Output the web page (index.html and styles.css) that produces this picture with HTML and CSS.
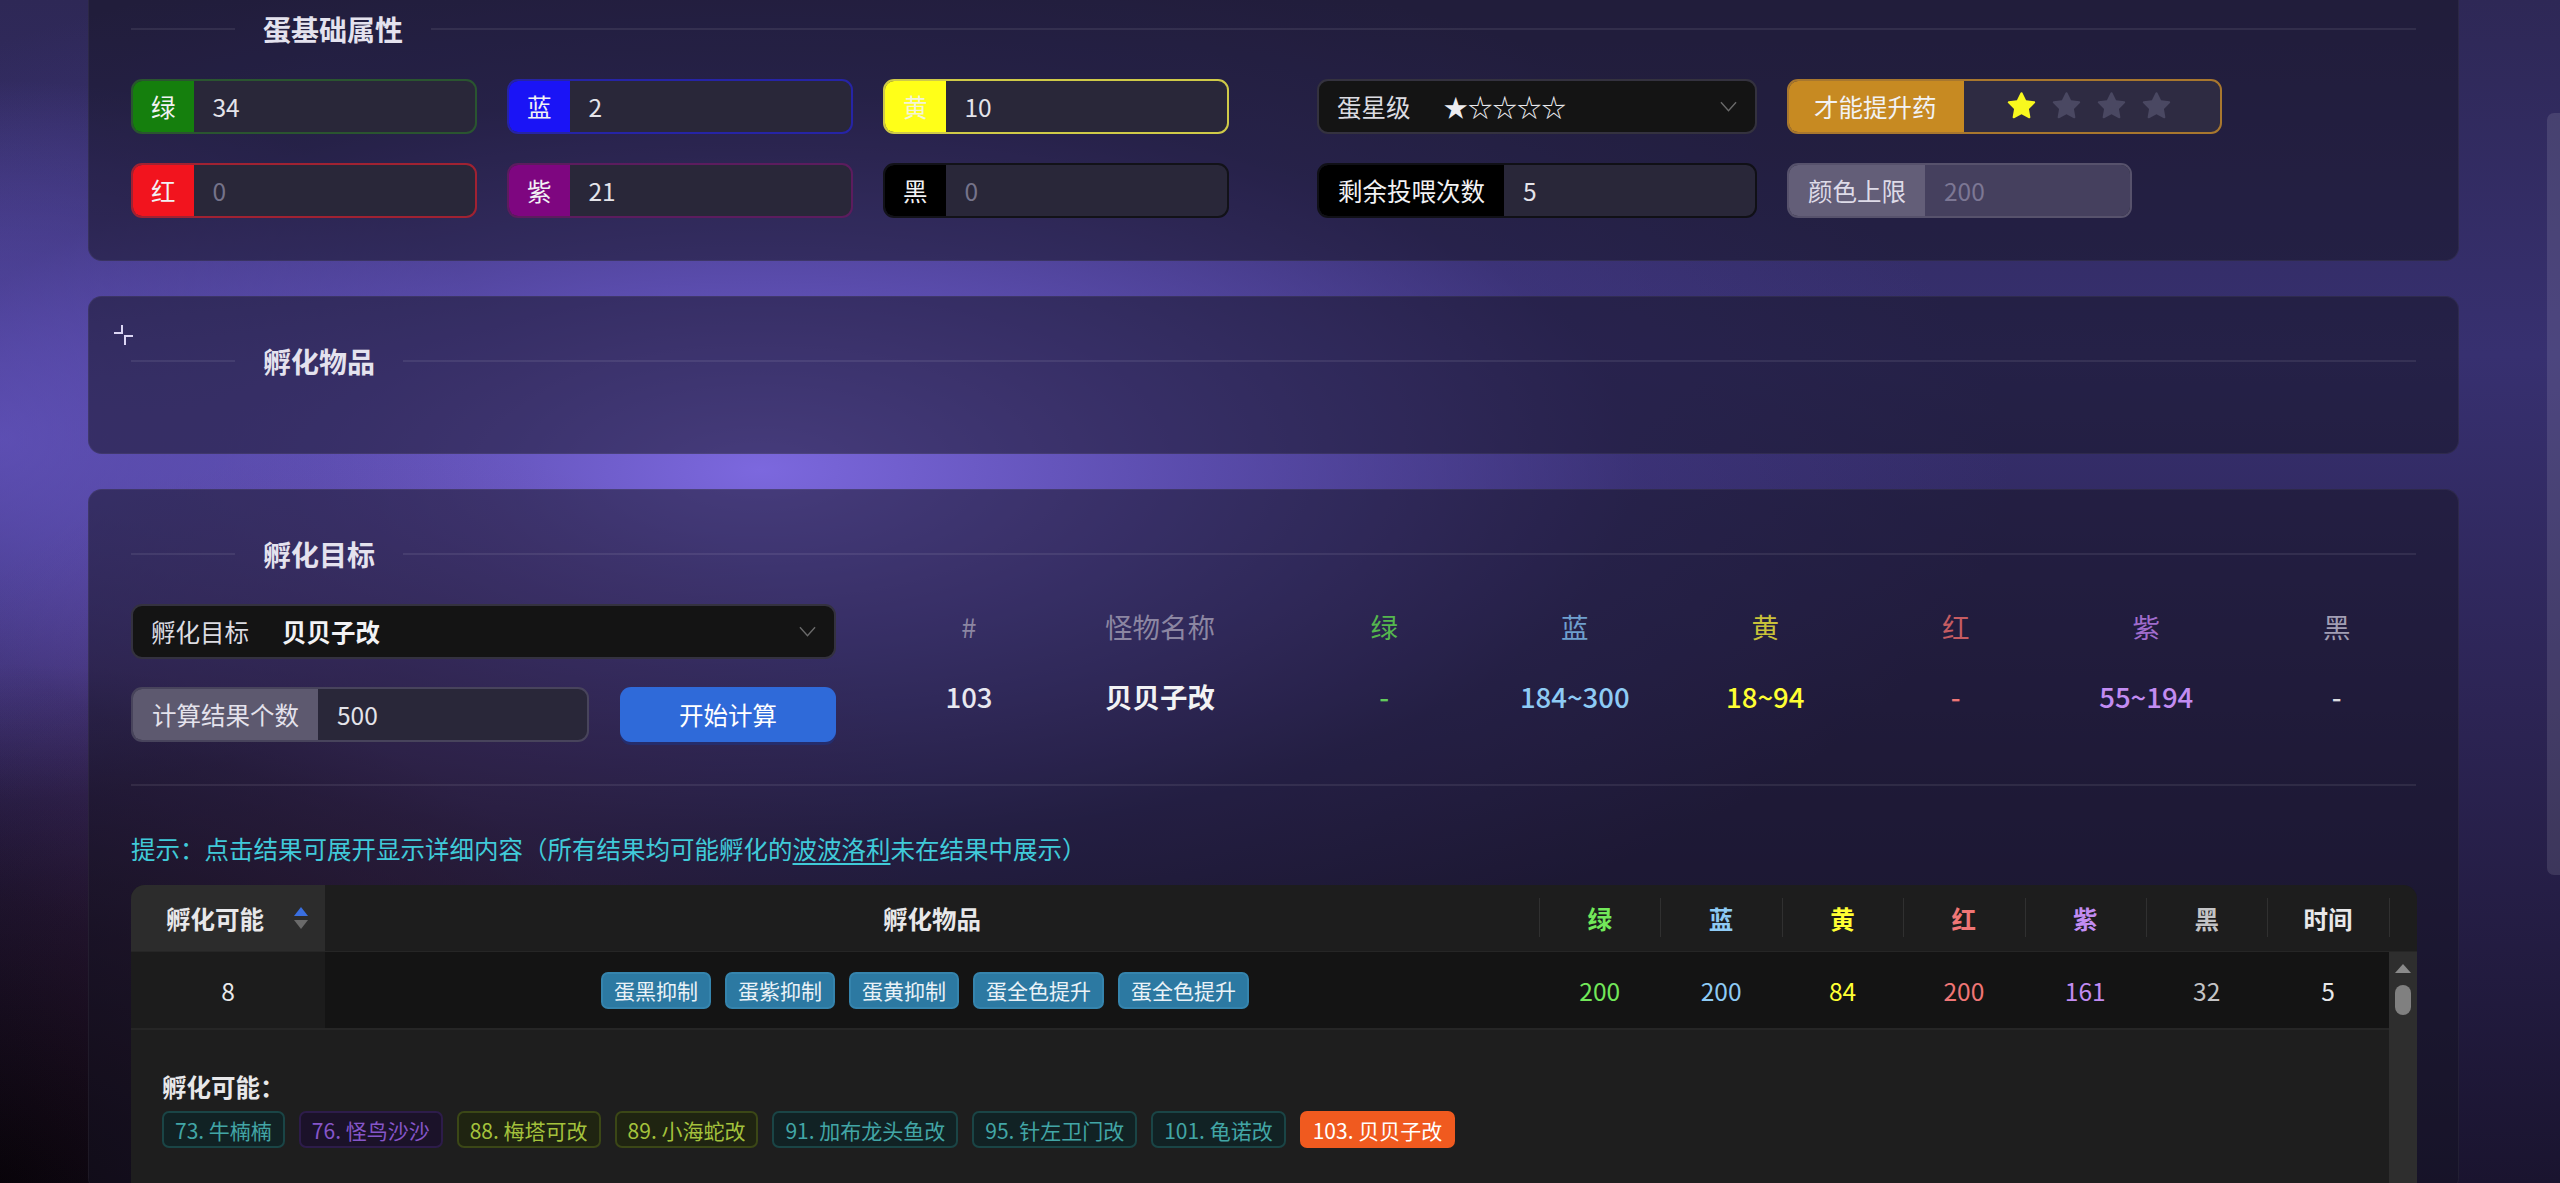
FILE: index.html
```html
<!DOCTYPE html>
<html lang="zh-CN">
<head>
<meta charset="utf-8">
<title>孵化计算器</title>
<link rel="stylesheet" href="styles.css">
</head>
<body>
<svg class="defs" width="0" height="0" aria-hidden="true">
  <symbol id="star" viewBox="64 64 896 896">
    <path d="M908.1 353.1l-253.9-36.9L540.7 86.1c-3.1-6.3-8.2-11.4-14.5-14.5-15.8-7.8-35-1.3-42.9 14.5L369.8 316.2l-253.9 36.9c-7 1-13.4 4.3-18.3 9.3a32.05 32.05 0 00.6 45.3l183.7 179.1-43.4 252.9a31.950 31.950 0 0046.4 33.7L512 754l227.1 119.4c6.2 3.3 13.4 4.4 20.3 3.2 17.4-3 29.1-19.5 26.1-36.9l-43.4-252.9 183.7-179.1c5-4.9 8.3-11.3 9.3-18.3 2.7-17.5-9.5-33.7-27-36.3z"/>
  </symbol>
  <symbol id="chev" viewBox="0 0 18 11">
    <polyline points="1,1 9,10 17,1" fill="none" stroke="currentColor" stroke-width="1.5"/>
  </symbol>
</svg>

<div class="page">
  <section class="card card-basic">
    <div class="divider"><span class="divider-text">蛋基础属性</span></div>
    <div class="attr-grid">
      <div class="ig c-green"><span class="ig-label">绿</span><span class="ig-input">34</span></div>
      <div class="ig c-blue"><span class="ig-label">蓝</span><span class="ig-input">2</span></div>
      <div class="ig c-yellow"><span class="ig-label">黄</span><span class="ig-input">10</span></div>
      <div class="select sel-star">
        <span class="sel-prefix">蛋星级</span><span class="sel-value">★☆☆☆☆</span>
        <svg class="chev"><use href="#chev"/></svg>
      </div>
      <div class="ig c-talent">
        <span class="ig-label">才能提升药</span>
        <span class="rate">
          <svg class="star on"><use href="#star"/></svg>
          <svg class="star"><use href="#star"/></svg>
          <svg class="star"><use href="#star"/></svg>
          <svg class="star"><use href="#star"/></svg>
        </span>
      </div>

      <div class="ig c-red"><span class="ig-label">红</span><span class="ig-input ph">0</span></div>
      <div class="ig c-purple"><span class="ig-label">紫</span><span class="ig-input">21</span></div>
      <div class="ig c-black"><span class="ig-label">黑</span><span class="ig-input ph">0</span></div>
      <div class="ig c-feed"><span class="ig-label">剩余投喂次数</span><span class="ig-input">5</span></div>
      <div class="ig c-cap"><span class="ig-label">颜色上限</span><span class="ig-input dis">200</span></div>
    </div>
  </section>

  <section class="card card-items">
    <svg class="cursor" viewBox="0 0 22 22" aria-hidden="true">
      <path d="M1 9 H9 V1" fill="none" stroke="#dcd6f4" stroke-width="2"/>
      <path d="M12 21 V12 H20" fill="none" stroke="#dcd6f4" stroke-width="2"/>
    </svg>
    <div class="divider"><span class="divider-text">孵化物品</span></div>
  </section>

  <section class="card card-target">
    <div class="divider"><span class="divider-text">孵化目标</span></div>
    <div class="target-row">
      <div class="target-left">
        <div class="select sel-target">
          <span class="sel-prefix">孵化目标</span><span class="sel-value strong">贝贝子改</span>
          <svg class="chev"><use href="#chev"/></svg>
        </div>
        <div class="calc-row">
          <div class="ig c-count"><span class="ig-label">计算结果个数</span><span class="ig-input">500</span></div>
          <button class="btn-primary" type="button">开始计算</button>
        </div>
      </div>
      <div class="stats">
        <div class="sh muted">#</div>
        <div class="sh muted">怪物名称</div>
        <div class="sh h-green">绿</div>
        <div class="sh h-blue">蓝</div>
        <div class="sh h-yellow">黄</div>
        <div class="sh h-red">红</div>
        <div class="sh h-purple">紫</div>
        <div class="sh h-black">黑</div>

        <div class="sv v-num">103</div>
        <div class="sv v-name">贝贝子改</div>
        <div class="sv v-green">-</div>
        <div class="sv v-blue">184~300</div>
        <div class="sv v-yellow">18~94</div>
        <div class="sv v-red">-</div>
        <div class="sv v-purple">55~194</div>
        <div class="sv v-black">-</div>
      </div>
    </div>

    <div class="hr"></div>

    <p class="hint">提示：点击结果可展开显示详细内容（所有结果均可能孵化的<span class="u">波波洛利</span>未在结果中展示）</p>

    <div class="table">
      <div class="thead">
        <div class="th th-sorted">孵化可能
          <span class="sorter"><span class="up"></span><span class="down"></span></span>
        </div>
        <div class="th">孵化物品</div>
        <div class="th sep t-green">绿</div>
        <div class="th sep t-blue">蓝</div>
        <div class="th sep t-yellow">黄</div>
        <div class="th sep t-red">红</div>
        <div class="th sep t-purple">紫</div>
        <div class="th sep t-black">黑</div>
        <div class="th sep t-time">时间</div>
        <div class="th sep gutter"></div>
      </div>
      <div class="tbody">
        <div class="tbody-main">
          <div class="tr">
            <div class="td td-sorted">8</div>
            <div class="td">
              <span class="tag tag-blue">蛋黑抑制</span><span class="tag tag-blue">蛋紫抑制</span><span class="tag tag-blue">蛋黄抑制</span><span class="tag tag-blue">蛋全色提升</span><span class="tag tag-blue">蛋全色提升</span>
            </div>
            <div class="td t-green">200</div>
            <div class="td t-blue">200</div>
            <div class="td t-yellow">84</div>
            <div class="td t-red">200</div>
            <div class="td t-purple">161</div>
            <div class="td t-black">32</div>
            <div class="td t-time">5</div>
          </div>
          <div class="expanded">
            <div class="exp-title">孵化可能：</div>
            <div class="exp-tags">
              <span class="tag tag-cyan">73. 牛楠楠</span><span class="tag tag-purple">76. 怪鸟沙沙</span><span class="tag tag-lime">88. 梅塔可改</span><span class="tag tag-lime">89. 小海蛇改</span><span class="tag tag-cyan">91. 加布龙头鱼改</span><span class="tag tag-cyan">95. 针左卫门改</span><span class="tag tag-cyan">101. 龟诺改</span><span class="tag tag-volcano">103. 贝贝子改</span>
            </div>
          </div>
        </div>
        <div class="tscroll">
          <span class="tscroll-arrow"></span>
          <span class="tscroll-thumb"></span>
        </div>
      </div>
    </div>
  </section>
</div>

<div class="page-scrollbar"></div>
</body>
</html>
```

FILE: styles.css
```css
* { box-sizing: border-box; }

html, body {
  margin: 0;
  width: 2560px;
  height: 1183px;
  overflow: hidden;
}

body {
  font-family: "Noto Sans CJK SC", "Noto Sans", sans-serif;
  font-size: 24.5px;
  color: #e6e6ec;
  background:
    radial-gradient(ellipse 560px 460px at 380px 900px, rgba(110, 40, 80, 0.26), rgba(110, 40, 80, 0) 100%),
    radial-gradient(ellipse 700px 520px at 0px 1183px, rgba(6, 3, 8, 1), rgba(6, 3, 8, 0.6) 40%, rgba(6, 3, 8, 0) 100%),
    radial-gradient(ellipse 1250px 540px at 760px 470px, rgba(124, 104, 222, 1) 0%, rgba(100, 84, 190, 0.78) 35%, rgba(72, 60, 145, 0.35) 70%, rgba(60, 50, 120, 0) 100%),
    radial-gradient(ellipse 520px 360px at 0px 440px, rgba(108, 92, 205, 0.85), rgba(108, 92, 205, 0) 100%),
    linear-gradient(180deg, #2e2856 0%, #373070 30%, #2c2454 60%, #1a142f 100%);
}

.defs { position: absolute; width: 0; height: 0; }

.page {
  width: 2371px;
  margin-left: 88px;
  margin-top: -36px;
}

.card {
  position: relative;
  background: rgba(22, 20, 34, 0.52);
  box-shadow: inset 0 0 0 1px rgba(255, 255, 255, 0.05);
  border-radius: 14px;
  padding: 42px 43px 43px;
  margin-bottom: 35px;
}

.card-target { margin-bottom: 0; padding-bottom: 0; }

/* divider with left title */
.divider {
  display: flex;
  align-items: center;
  height: 46px;
  margin-bottom: 27px;
}
.divider::before {
  content: "";
  width: 104px;
  border-top: 2px solid rgba(255, 255, 255, 0.08);
}
.divider::after {
  content: "";
  flex: 1;
  border-top: 2px solid rgba(255, 255, 255, 0.08);
}
.divider-text {
  padding: 0 28px;
  font-size: 28px;
  font-weight: 700;
  color: #e4e2ee;
  line-height: 46px;
}

/* attribute grid */
.attr-grid {
  display: grid;
  grid-template-columns: 346px 346px 346px 498px 435px;
  column-gap: 30px;
  row-gap: 29px;
}

.ig {
  display: flex;
  height: 55px;
  border: 2px solid #444;
  border-radius: 11px;
  overflow: hidden;
  background: #292739;
}
.ig-label {
  display: flex;
  align-items: center;
  padding: 0 18px;
  color: #f2f2f4;
  white-space: nowrap;
}
.ig-input {
  display: flex;
  align-items: center;
  flex: 1;
  padding: 0 19px;
  color: #e4e4ea;
}
.ig-input.ph { color: #75738a; }
.ig-input.dis { background: #45405e; color: #7c7794; }

.c-green { border-color: #2a5530; }
.c-green .ig-label { background: #157f0d; }
.c-blue { border-color: #2624a6; }
.c-blue .ig-label { background: #1a14f6; }
.c-yellow { border-color: #cfca48; }
.c-yellow .ig-label { background: #ffff18; color: #f4f4d8; }
.c-red { border-color: #a02232; }
.c-red .ig-label { background: #f2141e; }
.c-purple { border-color: #5c1c5e; }
.c-purple .ig-label { background: #7e0680; }
.c-black { border-color: #121218; }
.c-black .ig-label { background: #000; }
.c-feed { border-color: #101016; width: 440px; justify-self: end; }
.c-feed .ig-label { background: #000; padding: 0 19px; }
.c-cap { border-color: #57526c; width: 345px; }
.c-cap .ig-label { background: #635e78; color: #dedbe8; padding: 0 19px; }
.c-talent { border-color: #a8772e; background: #2e2b42; }
.c-talent .ig-label { background: #c78a22; padding: 0 27px 0 25px; }
.c-count { border-color: #48445c; width: 458px; }
.c-count .ig-label { background: #5d596f; color: #e4e2ec; padding: 0 19px; }

/* select */
.select {
  display: flex;
  align-items: center;
  height: 55px;
  background: #141414;
  border: 2px solid #34323f;
  border-radius: 11px;
  padding: 0 18px 0 18px;
  color: #e6e6ea;
}
.sel-star { width: 440px; justify-self: end; }
.sel-prefix { color: #dcdce2; }
.sel-value { margin-left: 33px; flex: 1; color: #ececf0; }
.sel-value.strong { font-weight: 700; color: #f2f2f4; }
.chev { width: 17px; height: 11px; color: #6a6a6a; }

.rate {
  display: flex;
  align-items: center;
  gap: 16px;
  padding-left: 43px;
}
.star { width: 29px; height: 29px; fill: #4a4862; }
.star.on { fill: #f8f81e; }

/* hatch items card */
.cursor {
  position: absolute;
  left: 25px;
  top: 28px;
  width: 22px;
  height: 22px;
}

/* target card */
.target-row {
  display: flex;
  align-items: flex-start;
}
.target-left {
  width: 705px;
  flex: none;
  display: flex;
  flex-direction: column;
  gap: 28px;
}
.sel-target { width: 705px; }
.sel-target .sel-value { margin-left: 33px; }
.calc-row {
  display: flex;
  gap: 31px;
}
.btn-primary {
  width: 216px;
  height: 55px;
  border: none;
  border-radius: 11px;
  background: #2f6ad9;
  color: #ffffff;
  font-family: inherit;
  font-size: 24.5px;
  box-shadow: 0 3px 0 rgba(20, 60, 160, 0.35);
}

.stats {
  flex: none;
  margin-left: 71px;
  display: grid;
  grid-template-columns: 124px 258px repeat(6, 190.5px);
  grid-template-rows: 44px 44px;
  row-gap: 26px;
  font-size: 27.5px;
  text-align: center;
}
.sh, .sv { display: flex; align-items: center; justify-content: center; }
.sh.muted { color: #8c86a2; }
.h-green { color: #55b74e; }
.h-blue { color: #6f9fce; }
.h-yellow { color: #c9c23a; }
.h-red { color: #c65c62; }
.h-purple { color: #a06ccc; }
.h-black { color: #a29eb4; }
.sv { font-weight: 500; }
.v-num { color: #e8e8f0; }
.v-name { color: #f2f2f4; font-weight: 700; }
.v-green { color: #62cc5c; }
.v-blue { color: #8ecbf5; }
.v-yellow { color: #ffff33; }
.v-red { color: #ee7676; }
.v-purple { color: #c28cf2; }
.v-black { color: #dcdce0; }

.hr {
  height: 2px;
  margin-top: 42px;
  background: rgba(255, 255, 255, 0.08);
}

.hint {
  margin: 44px 0 0;
  line-height: 37px;
  color: #40cad9;
}
.hint .u { text-decoration: underline; text-underline-offset: 4px; }

/* result table */
.table {
  margin-top: 18px;
  width: 2286px;
  border-radius: 14px 14px 0 0;
  overflow: hidden;
}
.thead {
  display: grid;
  grid-template-columns: 194px 1214px repeat(7, 121.4px) 28px;
  height: 67px;
  background: #1d1d1d;
  border-bottom: 1px solid #262626;
}
.th {
  position: relative;
  display: flex;
  align-items: center;
  justify-content: center;
  font-weight: 700;
  color: #e8e8ea;
}
.th.sep::before {
  content: "";
  position: absolute;
  left: 0;
  top: 13px;
  bottom: 14px;
  width: 1px;
  background: #303030;
}
.th-sorted {
  background: #2c2c2c;
  justify-content: flex-start;
  padding-left: 35px;
}
.sorter {
  display: flex;
  flex-direction: column;
  gap: 4px;
  margin-left: 30px;
}
.sorter .up {
  width: 0; height: 0;
  border-left: 7.5px solid transparent;
  border-right: 7.5px solid transparent;
  border-bottom: 9px solid #3a6fe0;
}
.sorter .down {
  width: 0; height: 0;
  border-left: 7.5px solid transparent;
  border-right: 7.5px solid transparent;
  border-top: 9px solid #6a6a6a;
}

.t-green { color: #72e85a; }
.t-blue { color: #8ecbf5; }
.t-yellow { color: #ffff33; }
.t-red { color: #f07676; }
.t-purple { color: #c28cf2; }
.t-black { color: #c4c4c6; }
.t-time { color: #e8e8ea; }

.tbody {
  display: flex;
  height: 240px;
}
.tbody-main { width: 2258px; flex: none; }
.tr {
  display: grid;
  grid-template-columns: 194px 1214px repeat(7, 121.4px);
  height: 78px;
  background: #141414;
  border-bottom: 2px solid #262626;
}
.td {
  display: flex;
  align-items: center;
  justify-content: center;
}
.td-sorted { background: #1c1c1c; color: #e8e8ea; }

.tag {
  display: inline-flex;
  align-items: center;
  height: 37px;
  padding: 0 11px;
  margin-right: 14px;
  border: 2px solid transparent;
  border-radius: 7px;
  font-size: 21px;
  white-space: nowrap;
}
.tag-blue { background: #2c79a2; border-color: #3584ad; color: #eaf2f7; }
.tag-cyan { background: #112224; border-color: #1a4546; color: #42a6a6; }
.tag-purple { background: #1b1229; border-color: #2d1c4a; color: #8656c9; }
.tag-lime { background: #1f2411; border-color: #3b4716; color: #a4c23c; }
.tag-volcano { background: #f05a1f; border-color: #f05a1f; color: #ffffff; }

.expanded {
  background: #1e1e1e;
  height: 160px;
  padding: 38px 31px 0;
}
.exp-title {
  font-weight: 700;
  line-height: 37px;
  color: #e8e8ea;
}
.exp-tags {
  display: flex;
  margin-top: 6px;
}

.tscroll {
  width: 28px;
  flex: none;
  background: #2e2e2e;
  display: flex;
  flex-direction: column;
  align-items: center;
  padding-top: 12px;
}
.tscroll-arrow {
  width: 0; height: 0;
  border-left: 8px solid transparent;
  border-right: 8px solid transparent;
  border-bottom: 9px solid #8a8a8a;
}
.tscroll-thumb {
  width: 16px;
  height: 30px;
  margin-top: 12px;
  border-radius: 8px;
  background: #808080;
}

.page-scrollbar {
  position: fixed;
  right: 0;
  top: 113px;
  width: 13px;
  height: 762px;
  border-radius: 7px 0 0 7px;
  background: rgba(255, 255, 255, 0.11);
}
```
